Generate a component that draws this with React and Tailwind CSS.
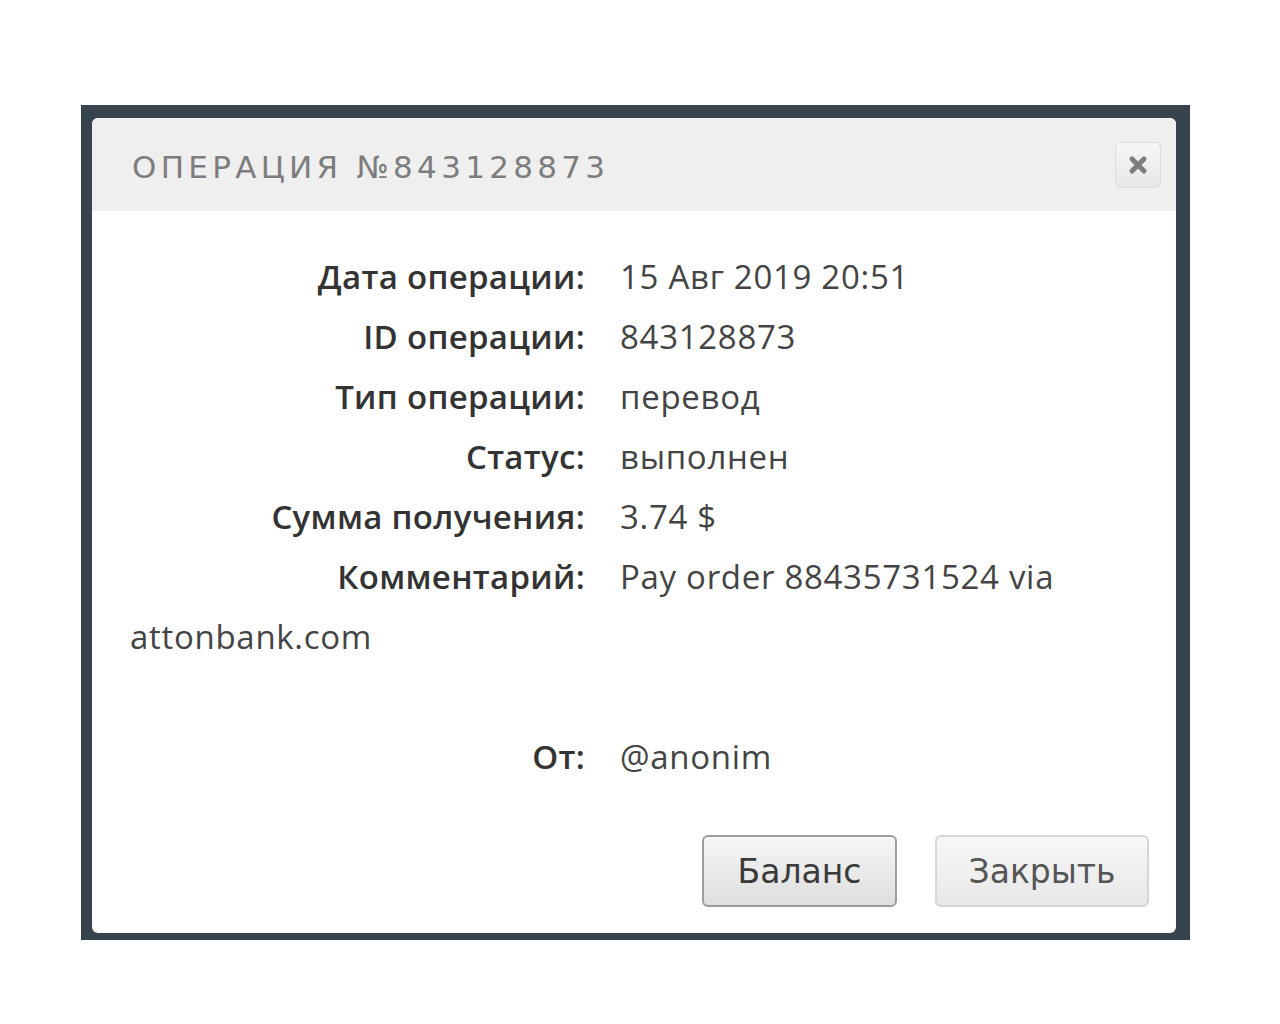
import React from 'react';

const rows = [
  { label: 'Дата операции:', value: '15 Авг 2019 20:51' },
  { label: 'ID операции:', value: '843128873' },
  { label: 'Тип операции:', value: 'перевод' },
  { label: 'Статус:', value: 'выполнен' },
  { label: 'Сумма получения:', value: '3.74 $' },
];

const Row = ({ label, children }) => (
  <div>
    <span className="inline-block w-[455px] text-right font-semibold text-[#333] tracking-[0.3px]">{label}</span>
    <span className="ml-[35px] text-[#444] tracking-[0.7px]">{children}</span>
  </div>
);

const App = () => {
  return (
    <div className="min-h-screen bg-white pt-[105px] pl-[81px]">
      <div className="w-[1109px] h-[835px] bg-[#37444d] pt-[13px] pl-[11px] pr-[14px] pb-[7px]">
        <div className="h-full rounded-md bg-white overflow-hidden flex flex-col">
          <div className="h-[93px] bg-[#efefef] flex items-center justify-between pl-[40px] pr-[15px]">
            <h1 className="pt-[6px] text-[31px] tracking-[4.3px] text-[#7d7d7d]" style={{ fontFamily: '"DejaVu Sans", sans-serif' }}>
              ОПЕРАЦИЯ №843128873
            </h1>
            <button className="w-[46px] h-[46px] rounded-md border border-[#dcdcdc] bg-gradient-to-b from-[#f7f7f7] to-[#e6e6e6] flex items-center justify-center">
              <svg width="22" height="22" viewBox="0 0 22 22">
                <path d="M5 5 L17 17 M17 5 L5 17" stroke="#7d7d7d" strokeWidth="5" strokeLinecap="round" />
              </svg>
            </button>
          </div>

          <div className="flex-1 flex flex-col pl-[38px] pr-[36px] pt-[36px] text-[33px] leading-[60px]" style={{ fontFamily: '"Open Sans", sans-serif' }}>
            {rows.map((r) => (
              <Row key={r.label} label={r.label}>{r.value}</Row>
            ))}
            <Row label="Комментарий:">
              Pay order 88435731524 via
              <br />
              attonbank.com
            </Row>
            <div className="h-[60px]" />
            <Row label="От:">@anonim</Row>

            <div className="mt-auto mb-[26px] flex justify-end gap-[38px] -mr-[9px]" style={{ fontFamily: '"DejaVu Sans", sans-serif' }}>
              <button className="w-[195px] h-[72px] rounded-md border-2 border-[#9d9d9d] bg-gradient-to-b from-[#f6f6f6] to-[#dedede] text-[33px] leading-none text-[#3a3a3a]">
                Баланс
              </button>
              <button className="w-[214px] h-[72px] rounded-md border-2 border-[#d6d6d6] bg-gradient-to-b from-[#f7f7f7] to-[#e8e8e8] text-[33px] leading-none text-[#555]">
                Закрыть
              </button>
            </div>
          </div>
        </div>
      </div>
    </div>
  );
};

export default App;
